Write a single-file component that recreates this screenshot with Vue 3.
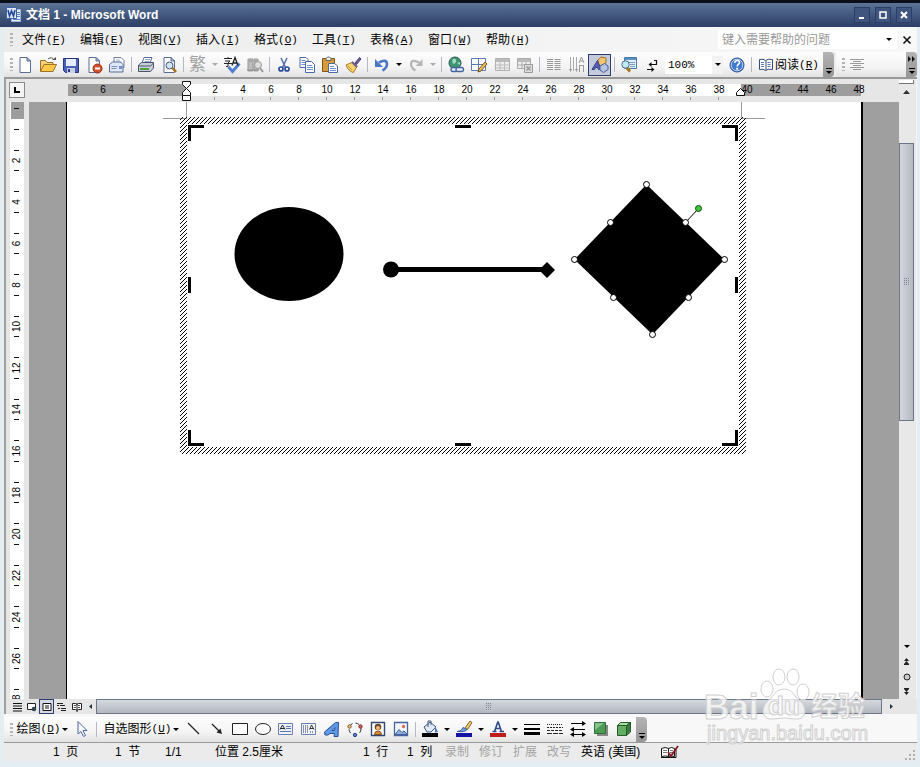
<script setup>
const menus = [
  ['文件', 'F'], ['编辑', 'E'], ['视图', 'V'], ['插入', 'I'], ['格式', 'O'],
  ['工具', 'T'], ['表格', 'A'], ['窗口', 'W'], ['帮助', 'H'],
]

const page = '<path d="M4 1.500h7l3.500 3.500v11.500h-10.500z" fill="#fff" stroke="#5a6c94"/><path d="M11 1.500v3.500h3.500z" fill="#b8c8e4" stroke="#5a6c94"/>'
const icons = {
  newDoc: page,
  open: '<path d="M1.500 15.500v-11h5l1.500 2h6v9z" fill="#f3d27a" stroke="#9c7424"/><path d="M1.500 15.500l3.500-7h12.500l-3.500 7z" fill="#ffc84a" stroke="#9c7424"/><path d="M9 3q4-3 6 1" fill="none" stroke="#555"/><path d="M13 4h4v-3z" fill="#555"/>',
  save: '<path d="M1.500 2.500h15v14h-13l-2-2z" fill="#4a5fb8" stroke="#28367e"/><path d="M4 3h10v7h-10z" fill="#e6ecfa"/><path d="M5 12h8v5h-8z" fill="#c9d0e6"/><path d="M6 13h2v3h-2z" fill="#28367e"/>',
  permission: page + '<circle cx="12.500" cy="12.500" r="4.500" fill="#d2502c" stroke="#8f2e18"/><path d="M10 11.500h5v2h-5z" fill="#fff"/>',
  mail: '<path d="M6 1.500h7l3 3v7h-10z" fill="#fff" stroke="#6d7fa0"/><path d="M8 4h4M8 6h6" stroke="#9fb0cc"/><path d="M1.500 8.500l3-2.500h8l2.500 2.500v7.500h-13.500z" fill="#dfe8f6" stroke="#5a6c94"/><path d="M3.500 10.500h6M3.500 12.500h5" stroke="#7d90b4"/><path d="M11 10h3v3h-3z" fill="#6d90cc"/>',
  print: '<path d="M5 7l2-5.500h8l-2 5.500z" fill="#fff" stroke="#5a6c94"/><path d="M8 3.500h5M7.500 5.500h5" stroke="#8fa5c8"/><path d="M1.500 9l3-2.500h12v5.500l-3 3.500h-12z" fill="#c8d0dc" stroke="#4a5468"/><path d="M2 10h11.500l3-3" fill="none" stroke="#4a5468"/><path d="M3 12h9v2h-9z" fill="#52a03c"/>',
  preview: page + '<circle cx="9.500" cy="9.500" r="3.500" fill="#cfe6fa" stroke="#4a5468"/><path d="M12.500 12l3.500 4" stroke="#a87020" stroke-width="2.500"/>',
  spell: '<path d="M5.500 11l4 4.500 7-8" fill="none" stroke="#4f7fd0" stroke-width="3"/><path d="M1 2.500h8M5 1v2M2 5h5l-2 2v3.500h-2M1 7.500h8" fill="none" stroke="#222"/><path d="M9 9.500l3-8 3 8M10 7h4" fill="none" stroke="#222" stroke-width="1.300"/>',
  research: '<path d="M2 3h5v12h-5zM8 3h4v12h-4z" fill="#bcbcbc" stroke="#999"/><path d="M3 5h3M9 5h2M1 14h12" stroke="#8e8e8e"/><circle cx="12" cy="9" r="3.500" fill="#ddd" stroke="#999"/><path d="M14 12l3 4" stroke="#999" stroke-width="2"/>',
  cut: '<path d="M6 2l4.500 9.500M12 2l-4.500 9.500" stroke="#5c72a8" stroke-width="1.600"/><circle cx="6" cy="13" r="2" fill="none" stroke="#2b4b9c" stroke-width="1.700"/><circle cx="12" cy="13" r="2" fill="none" stroke="#2b4b9c" stroke-width="1.700"/>',
  copy: '<path d="M2 1.500h6l2 2v8h-8z" fill="#fff" stroke="#4a67a8"/><path d="M3.500 4.500h4M3.500 6.500h4M3.500 8.500h4" stroke="#6c8fd0"/><path d="M7.500 5.500h6l3 3v8h-9z" fill="#fff" stroke="#4a67a8"/><path d="M9 9.500h5M9 11.500h6M9 13.500h6" stroke="#6c8fd0"/>',
  paste: '<path d="M1.500 2.500h12v13h-12z" fill="#d99a38" stroke="#80581c"/><path d="M5 4.500v-2l1.500-1.500h2l1.500 1.500v2z" fill="#e9edf2" stroke="#666"/><path d="M7.500 7.500h6l3 2.500v6.500h-9z" fill="#fff" stroke="#4a67a8"/><path d="M9 10.500h4M9 12.500h6M9 14.500h6" stroke="#6c8fd0"/>',
  brush: '<path d="M11 7l4.500-5.500 1.500 1.500-4.500 5.500z" fill="#72629c" stroke="#4b3f72"/><path d="M2 9l7-3 4 4.500-3.500 6q-5-1-7.500-7.500z" fill="#f6d26c" stroke="#a47c28"/><path d="M8 6l5 5" stroke="#6d5f8e" stroke-width="2"/><path d="M4 10l4 4" stroke="#c49436"/>',
  undo: '<path d="M6 6.500q7.500-4 8 1.500 0 4-4.500 6.500" fill="none" stroke="#4a76c8" stroke-width="2.600"/><path d="M2 3v8h8z" fill="#4a76c8"/>',
  redo: '<path d="M12 6.500q-7.500-4-8 1.500 0 4 4.500 6.500" fill="none" stroke="#b5b5b5" stroke-width="2.200"/><path d="M15.500 3v7h-7z" fill="#b5b5b5"/>',
  link: '<circle cx="8" cy="7" r="6" fill="#3c9470" stroke="#245c58"/><path d="M5 4q3-3 4 0t-3 4zM10 7l3-1v3z" fill="#a5dcc0"/><rect x="4" y="11.500" width="7" height="4" rx="2" fill="#e5edfa" stroke="#44629c" stroke-width="1.300"/><rect x="9" y="11.500" width="7.500" height="4" rx="2" fill="#e5edfa" stroke="#44629c" stroke-width="1.300"/>',
  tableDraw: '<path d="M1.500 2.500h14v12h-14zM1.500 8.500h14M8.500 2.500v12" fill="#fff" stroke="#5a78b4"/><path d="M8 16l1-3 6-7 2 2-6 7z" fill="#f0c058" stroke="#73501c"/>',
  tableIns: '<path d="M2.500 2.500h14v12h-14z" fill="#eee" stroke="#b0b0b0"/><path d="M3 3h13v3h-13z" fill="#bbb"/><path d="M3 9h13M3 12h13M7 6v8M11.500 6v8" stroke="#bbb"/>',
  sheet: '<path d="M1.500 2.500h13v10h-13z" fill="#eee" stroke="#aaa"/><path d="M2 3h12v3h-12z" fill="#bbb"/><path d="M2 9h12M6 6v6M10 6v6" stroke="#aaa"/><path d="M8.500 8.500h8v8h-8z" fill="#ddd" stroke="#999"/><path d="M10.500 10.500l4 4M14.500 10.500l-4 4" stroke="#999" stroke-width="1.500"/>',
  columns: '<path d="M2 3.500h6M2 5.500h6M2 7.500h6M2 9.500h6M2 11.500h6M2 13.500h6M9.500 3.500h6M9.500 5.500h6M9.500 7.500h6M9.500 9.500h6M9.500 11.500h6M9.500 13.500h6" stroke="#999"/>',
  direction: '<path d="M2.500 1v14M5.500 1v14M8.500 1v14" stroke="#aaa"/><path d="M1 13l1.500 3 1.500-3zM7 13l1.500 3 1.500-3z" fill="#999"/><path d="M11 7l2.500-6 2.500 6M12 5h3M11 9.500h5M11.500 10v6M15.500 10v6" fill="none" stroke="#999"/>',
  drawing: '<path d="M7 4l3-3 5 1v5l-3 3-5-1z" fill="#f0c470" stroke="#a0742c"/><path d="M1 13.500l5.500-9 3.500 9h-2.500l-1-2h-2l-1 2z" fill="#5b5cb8" stroke="#33407e"/><path d="M9 10l4.500-2.500 3.500 2.500v3.500l-4.500 3-3.500-2.500z" fill="#b4c4e4" stroke="#4a5c90"/>',
  map: '<path d="M4.500 1.500h12v11h-12z" fill="#e2f0fa" stroke="#4a78a8"/><path d="M5 2h11v2h-11z" fill="#5b90c8"/><path d="M9 6.500h6M10 8.500h5M10 10.500h5" stroke="#7d9cc0"/><circle cx="5.500" cy="8.500" r="3.700" fill="#bfeaf6" stroke="#48708c"/><path d="M7 12l3 3.500" stroke="#a87820" stroke-width="3"/>',
  marks: '<path d="M13.500 4v4.500h-6M4 13.500h6" fill="none" stroke="#111" stroke-width="1.200"/><path d="M8.500 6v5l-3-2.500zM8.500 11v5l3-2.500zM11 4h3v1h-3z" fill="#111"/>',
  help: '<circle cx="9" cy="9" r="7" fill="#3f78cc" stroke="#2a4c94"/><circle cx="9" cy="9" r="5.800" fill="none" stroke="#bcd6f6"/><path d="M6.700 7q.300-2.500 2.500-2.500t2.300 2q0 1.200-1.300 2-1 .700-1 2" fill="none" stroke="#fff" stroke-width="1.600"/><path d="M8.200 11.700h2v2h-2z" fill="#fff"/>',
  book: '<path d="M2.500 3.500q4-1 6 1 2.500-2 7-1v10q-5-1-7 1-2-2-6-1z" fill="#fff" stroke="#334a78"/><path d="M9 5v9" stroke="#334a78"/><path d="M4 6.500h3M4 8.500h3M4 10.500h3M10.500 6.500h3M10.500 8.500h3M10.500 10.500h3" stroke="#5e7cae"/>',
  center: '<path d="M2 3.500h14M5 5.500h8M2 7.500h14M5 9.500h8M2 11.500h14M5 13.500h8" stroke="#999"/>',
  pointer: '<path d="M5 1.500v12.500l3-2.500 2.500 5 2-1-2.500-5h4z" fill="#f4f7fd" stroke="#53699a"/>',
  line: '<path d="M3 3l11 11" stroke="#222" stroke-width="1.300"/>',
  arrow: '<path d="M4 4l8 8" stroke="#222" stroke-width="1.300"/><path d="M14 14l-1.500-5.500-4 4z" fill="#222"/>',
  rect: '<path d="M1.500 3.500h15v11h-15z" fill="#fff" stroke="#222"/>',
  oval: '<ellipse cx="9" cy="9" rx="7.500" ry="5.500" fill="#fff" stroke="#222"/>',
  textH: '<path d="M1.500 3.500h14v11h-14z" fill="#eef3fb" stroke="#6a80b0"/><path d="M3 9.500l2.500-4.500 2.500 4.500M4 8.500h3" fill="none" stroke="#222"/><path d="M9 6.500h5M9 8.500h5M3 11.500h11" fill="none" stroke="#5a74ac"/>',
  textV: '<path d="M1.500 3.500h14v11h-14z" fill="#f3f4f7" stroke="#6a80b0"/><path d="M3.500 5v8M5.500 5v8M7.500 5v8M10.500 11v2M12.500 11v2" stroke="#8a93a6"/><path d="M9.500 9.500l2-4.500 2.500 4.500M10 8.500h3" fill="none" stroke="#333"/>',
  wordart: '<path d="M1.500 12l11-9.500h3l-.500 14h-4l.500-3h-4.500l-2 1.500h-3zM9 10.500h2.500l.500-3z" fill="#5f9be4" stroke="#2a4f9c" fill-rule="evenodd"/>',
  diagram: '<circle cx="9" cy="9" r="6" fill="none" stroke="#333" stroke-dasharray="4 3"/><circle cx="3.500" cy="6.500" r="1.700" fill="#f0c080" stroke="#7c5a24"/><circle cx="14.500" cy="6.500" r="1.700" fill="#d8604c" stroke="#7c342c"/><circle cx="9" cy="15" r="1.700" fill="#5a7cd0" stroke="#2c4280"/>',
  clipart: '<path d="M2.500 2.500h13v13h-13z" fill="#fff" stroke="#334a78" stroke-width="1.400"/><circle cx="9" cy="7" r="3.300" fill="#6c4a2c"/><circle cx="9" cy="8" r="2" fill="#f2b87a"/><path d="M5.500 14.500q0-3.500 3.500-3.500t3.500 3.500z" fill="#e08a34" stroke="#8a4c18"/>',
  picture: '<path d="M2.500 2.500h13v13h-13z" fill="#f2f6fd" stroke="#4a649c" stroke-width="1.300"/><path d="M3 14.500l4-5 3 3 2-1.500 3 3v.500z" fill="#8dacdc" stroke="#44609a"/><circle cx="11.500" cy="6.500" r="1.700" fill="#e26c4c"/>',
  fill: '<path d="M3 7l6-5 6 5-5 5h-4z" fill="#dfe8f4" stroke="#3f5684"/><path d="M7 7v-6h3v4" fill="none" stroke="#3f5684"/><path d="M14 6l3 6-3 .500z" fill="#4a7ac4"/><path d="M1 13h16v4h-16z" fill="#000"/>',
  lineColor: '<path d="M10 8l5-7 2 1.500-4.500 7z" fill="#f2cc70" stroke="#7c5c24"/><path d="M2 11.500q5 0 6-4l4 2q-2 3-10 2z" fill="#72a0e4" stroke="#3a5ca4"/><path d="M1 13h16v4h-16z" fill="#1414a4"/>',
  fontColor: '<path d="M3.500 11.500h4M10.500 11.500h4.500M5.500 11.500l3.500-10M9 1.500l3.500 10M7 8.500h4.500" fill="none" stroke="#304c88" stroke-width="1.600"/><path d="M1 13h16v4h-16z" fill="#c01c1c"/>',
  lineStyle: '<path d="M1 4.500h16" stroke="#000"/><path d="M1 9h16" stroke="#000" stroke-width="2"/><path d="M1 13.500h16" stroke="#000" stroke-width="3"/>',
  dashStyle: '<path d="M1 4.500h16" stroke="#222" stroke-dasharray="1 1"/><path d="M1 7.500h16" stroke="#222" stroke-dasharray="2 1"/><path d="M1 10.500h16" stroke="#222" stroke-dasharray="3 1"/><path d="M1 13.500h16" stroke="#222" stroke-dasharray="5 1"/>',
  arrowStyle: '<path d="M2 3.500h12M3 9.500h13M3 14.500h12" stroke="#000"/><path d="M13 1l4 2.500-4 2.500zM5 7l-4 2.500 4 2.500zM5 12l-4 2.500 4 2.500zM13 12l4 2.500-4 2.500z" fill="#000"/>',
  shadow: '<path d="M5 5h11v11h-11z" fill="#888"/><path d="M2.500 2.500h11v11h-11z" fill="#4c9c54" stroke="#2c6c38"/><path d="M3 3h9l-9 7z" fill="#86c48a"/>',
  cube: '<path d="M2.500 5.500h9v10h-9z" fill="#63ae62" stroke="#25592c"/><path d="M2.500 5.500l3-3h10l-4 3z" fill="#a8dca0" stroke="#25592c"/><path d="M11.500 5.500l4-3v9.500l-4 3.500z" fill="#3a7c40" stroke="#25592c"/>',
  normalView: '<path d="M5 5.500h9M5 8h9M5 10.500h9M5 13h9" stroke="#111"/>',
  webView: '<path d="M4.500 5.500h8v6h-8z" fill="#fff" stroke="#222"/><circle cx="11" cy="11" r="2.300" fill="#345" />',
  printView: '<path d="M5 5.500h8v7h-8z" fill="#fff" stroke="#111"/><path d="M7 8h4M7 10h4" stroke="#111"/>',
  outline: '<path d="M4 5.500h6M7 7.500h5M8 10.500h5M8 12.500h5" stroke="#222"/><path d="M4 7h2v1h-2zM5 10h2v1h-2z" fill="#222"/>',
  reading: '<path d="M4.500 5.500h3l1.500 1 1.500-1h3v6h-3l-1.500 1-1.500-1h-3zM9 5v9" fill="#fff" stroke="#222"/><path d="M6 7.500h2M6 9.500h2M10 7.500h2M10 9.500h2" stroke="#555"/>',
}

const bar = [
  ['newDoc', '新建'], ['open', '打开'], ['save', '保存'], ['permission', '权限'], ['mail', '电子邮件'], '|',
  ['print', '打印'], ['preview', '打印预览'], '|',
  ['trad', '中文简繁转换'], 'v-', ['spell', '拼写和语法'], ['research', '信息检索'], '|',
  ['cut', '剪切'], ['copy', '复制'], ['paste', '粘贴'], ['brush', '格式刷'], '|',
  ['undo', '撤消'], 'v', ['redo', '恢复'], 'v-', '|',
  ['link', '超链接'], ['tableDraw', '表格和边框'], ['tableIns', '插入表格'], ['sheet', '插入工作表'], '|',
  ['columns', '分栏'], ['direction', '文字方向'], ['drawing', '绘图', true], '|',
  ['map', '文档结构图'], ['marks', '显示编辑标记'],
]

const shapesBar = [
  ['line', '直线'], ['arrow', '箭头'], ['rect', '矩形'], ['oval', '椭圆'], ['textH', '文本框'],
  ['textV', '竖排文本框'], ['wordart', '艺术字'], ['diagram', '图示'], ['clipart', '剪贴画'], ['picture', '图片'], '|',
  ['fill', '填充颜色'], 'v', ['lineColor', '线条颜色'], 'v', ['fontColor', '字体颜色'], 'v',
  ['lineStyle', '线型'], ['dashStyle', '虚线线型'], ['arrowStyle', '箭头样式'], ['shadow', '阴影样式'], ['cube', '三维效果样式'],
]

const views = [
  ['normalView', '普通视图'], ['webView', 'Web 版式视图'], ['printView', '页面视图', true],
  ['outline', '大纲视图'], ['reading', '阅读版式'],
]

const hMarks = Array.from({ length: 29 }, (_, i) => i * 2 - 8).filter((n) => n !== 0)
const vMarks = Array.from({ length: 14 }, (_, i) => (i + 1) * 2)
const vTicks = Array.from({ length: 29 }, (_, i) => i)

const handles = [
  [646.5, 184.5], [610.5, 222.5], [685.5, 222.5], [574.5, 259.5],
  [724.5, 259.5], [613.5, 297.5], [688.5, 297.5], [652.5, 334.5],
]
</script>

<template>
  <div class="window">
    <header class="titlebar">
      <svg class="logo" width="16" height="16" viewBox="0 0 16 16">
        <path d="M5.500 2.500h9v12h-9z" fill="#e8effb" stroke="#9fb6de" />
        <path d="M11 5.500h3M11 7.500h3M11 9.500h3M7 12.500h7" stroke="#5a80c0" />
        <path d="M.5.500h10v11h-10z" fill="#dce8fa" stroke="#3d62a8" />
        <path d="M2 3l1.500 6L5.500 4l2 5L9 3" fill="none" stroke="#234a94" stroke-width="1.600" />
      </svg>
      <h1>文档 1 - Microsoft Word</h1>
      <div class="winbtns">
        <button aria-label="最小化"><svg width="14" height="14"><path d="M4 10h5" stroke="#fff" stroke-width="2" /></svg></button>
        <button aria-label="最大化"><svg width="14" height="14"><path d="M4 4h6v6h-6zM4 4h6" fill="none" stroke="#fff" stroke-width="1.500" /></svg></button>
        <button aria-label="关闭"><svg width="14" height="14"><path d="M4 4l6 6M10 4l-6 6" stroke="#fff" stroke-width="2" /></svg></button>
      </div>
    </header>

    <div class="body">
      <nav class="menubar">
        <span class="grip"></span>
        <button v-for="m in menus" :key="m[1]" class="menu">{{ m[0] }}<span class="key">(<u>{{ m[1] }}</u>)</span></button>
        <input class="ask" type="text" placeholder="键入需要帮助的问题" aria-label="键入需要帮助的问题" />
        <button class="askdrop" aria-label="展开"><i class="caret"></i></button>
        <button class="docclose" aria-label="关闭文档"><svg width="10" height="10"><path d="M1.500 1.500l7 7M8.500 1.500l-7 7" stroke="#111" stroke-width="1.600" /></svg></button>
      </nav>

      <div class="toolrow">
        <div class="toolbar">
          <span class="grip"></span>
          <template v-for="(t, i) in bar" :key="i">
            <span v-if="t === '|'" class="sep"></span>
            <button v-else-if="t === 'v' || t === 'v-'" class="drop" aria-label="更多"><i class="caret" :class="{ dim: t === 'v-' }"></i></button>
            <button v-else-if="t[0] === 'trad'" class="tool trad" :aria-label="t[1]">繁</button>
            <button v-else class="tool" :class="{ on: t[2] }" :aria-label="t[1]"><svg width="18" height="18" viewBox="0 0 18 18" v-html="icons[t[0]]"></svg></button>
          </template>
          <div class="zoom">
            <input type="text" value="100%" aria-label="显示比例" />
            <button aria-label="选择比例"><i class="caret"></i></button>
          </div>
          <button class="tool" aria-label="帮助"><svg width="18" height="18" viewBox="0 0 18 18" v-html="icons.help"></svg></button>
          <span class="sep"></span>
          <button class="read"><svg width="18" height="18" viewBox="0 0 18 18" v-html="icons.book"></svg>阅读<span class="key">(<u>R</u>)</span></button>
          <button class="cap" aria-label="工具栏选项"><i class="dash"></i><i class="caret"></i></button>
        </div>
        <div class="toolbar rest">
          <span class="grip"></span>
          <button class="tool" aria-label="居中"><svg width="18" height="18" viewBox="0 0 18 18" v-html="icons.center"></svg></button>
          <button class="cap end" aria-label="格式工具栏选项">
            <svg width="8" height="6"><path d="M0 0l3 3-3 3zM4 0l3 3-3 3z" fill="#111" /></svg>
            <i class="dash"></i><i class="caret"></i>
          </button>
        </div>
      </div>

      <main class="work">
        <div class="left">
          <div class="hruler">
            <button class="corner" aria-label="左对齐制表符"><svg width="8" height="8"><path d="M2 1v5h5" fill="none" stroke="#000" stroke-width="2" /></svg></button>
            <svg class="hscale" height="22">
              <rect x="39" y="4" width="118" height="12" fill="#9d9d9d" />
              <rect x="157" y="4" width="555" height="12" fill="#fff" />
              <rect x="712" y="4" width="120" height="12" fill="#9d9d9d" />
              <g v-for="n in hMarks" :key="n">
                <text :x="158 + n * 14" y="13" text-anchor="middle">{{ Math.abs(n) }}</text>
                <path v-if="n > 0 && n < 40" :d="`M${157.5 + n * 14} 17v3`" stroke="#999" />
              </g>
              <g fill="#fff" stroke="#111">
                <path d="M153.500 1.500h8v3l-4 4-4-4z" />
                <path d="M157.500 8.500l4 4v3h-8v-3z" />
                <path d="M153.500 15.500h8v5h-8z" />
                <path d="M711.500 8.500l4 4v3h-8v-3z" />
              </g>
            </svg>
          </div>
          <div class="docrow">
            <svg class="vscale" width="16">
              <rect x="1" y="0" width="14" height="100%" fill="#fff" />
              <rect x="2" y="0" width="13" height="17" fill="#9d9d9d" />
              <path v-for="k in vTicks" :key="k" :d="`M5 ${Math.round(6 + k * 20.75) + 0.5}h5`" stroke="#111" />
              <text v-for="n in vMarks" :key="'n' + n" :transform="`translate(11 ${17 + n * 20.75}) rotate(-90)`" text-anchor="middle">{{ n }}</text>
            </svg>
            <div class="desk">
              <article class="page">
                <svg class="drawing" viewBox="163 102 602 356" width="602" height="356">
                  <defs>
                    <pattern id="hatch" width="4" height="4" patternUnits="userSpaceOnUse">
                      <path d="M0 3h1v1h-1zM1 2h1v1h-1zM2 1h1v1h-1zM3 0h1v1h-1z" fill="#000" shape-rendering="crispEdges" />
                    </pattern>
                  </defs>
                  <path d="M186.500 102v16.500h-23.500M741.500 102v16.500h23.500" fill="none" stroke="#999" />
                  <path d="M180 117h566v337h-566zM187 124v323h552v-323z" fill="url(#hatch)" fill-rule="evenodd" />
                  <g fill="none" stroke="#000" stroke-width="3">
                    <path d="M204 126.500h-14.500v14.500M722 126.500h14.500v14.500M189.500 430v14.500h14.500M736.500 430v14.500h-14.500" />
                    <path d="M455 126.500h16M455 444.500h16M189.500 277v16M736.500 277v16" />
                  </g>
                  <ellipse cx="289" cy="254" rx="54.500" ry="47" />
                  <path d="M391 269.500h156" stroke="#000" stroke-width="5" />
                  <circle cx="391" cy="269.500" r="8" />
                  <path d="M547 262l8 8-8 8-8-8z" />
                  <path d="M646.500 184.500l78 75-72 75-78-75z" />
                  <path d="M685.500 222.500l13-14" stroke="#000" />
                  <circle v-for="h in handles" :key="h.join()" :cx="h[0]" :cy="h[1]" r="3" fill="#fff" stroke="#000" />
                  <circle cx="698.500" cy="208.500" r="3" fill="#3cc83c" stroke="#124a12" />
                </svg>
              </article>
            </div>
          </div>
        </div>
        <div class="vscroll">
          <span class="split"></span>
          <button class="sbtn up" aria-label="向上滚动"><svg width="7" height="4"><path d="M0 4l3.500-4 3.500 4z" fill="#333" /></svg></button>
          <div class="vtrack"><span class="gap1"></span><span class="vthumb"><i class="dots"></i></span><span class="gap2"></span></div>
          <button class="sbtn" aria-label="向下滚动"><i class="caret"></i></button>
          <button class="sbtn" aria-label="前一页"><svg width="5" height="7"><path d="M0 3l2.500-3 2.500 3zM0 6l2.500-3 2.500 3zM0 6h5v1h-5z" fill="#222" /></svg></button>
          <button class="sbtn" aria-label="选择浏览对象"><svg width="8" height="8"><circle cx="4" cy="4" r="3" fill="#ccc" stroke="#222" /></svg></button>
          <button class="sbtn" aria-label="下一页"><svg width="5" height="7"><path d="M0 0h5v1h-5zM0 1l2.500 3 2.500-3zM0 4l2.500 3 2.500-3z" fill="#222" /></svg></button>
        </div>
      </main>

      <div class="hscroll">
        <button v-for="v in views" :key="v[0]" class="view" :class="{ on: v[2] }" :aria-label="v[1]"><svg width="14" height="14" viewBox="2 2 14 14" v-html="icons[v[0]]"></svg></button>
        <button class="harrow" aria-label="向左滚动"><svg width="3" height="5"><path d="M3 0v5l-3-2.500z" fill="#234" /></svg></button>
        <span class="hthumb"><i class="dots"></i></span>
        <button class="harrow right" aria-label="向右滚动"><svg width="3" height="5"><path d="M0 0v5l3-2.500z" fill="#234" /></svg></button>
      </div>

      <div class="drawrow">
        <div class="toolbar">
          <span class="grip"></span>
          <button class="word">绘图<span class="key">(<u>D</u>)</span><i class="caret"></i></button>
          <button class="tool" aria-label="选择对象"><svg width="18" height="18" viewBox="0 0 18 18" v-html="icons.pointer"></svg></button>
          <span class="sep"></span>
          <button class="word shapes">自选图形<span class="key">(<u>U</u>)</span><i class="caret"></i></button>
          <template v-for="(t, i) in shapesBar" :key="i">
            <span v-if="t === '|'" class="sep"></span>
            <button v-else-if="t === 'v'" class="drop" aria-label="更多"><i class="caret"></i></button>
            <button v-else class="tool" :aria-label="t[1]"><svg width="18" height="18" viewBox="0 0 18 18" v-html="icons[t[0]]"></svg></button>
          </template>
          <button class="cap" aria-label="绘图工具栏选项"><i class="dash"></i><i class="caret"></i></button>
        </div>
      </div>

      <footer class="status">
        <span class="s1">1&nbsp; 页</span>
        <span class="s2">1&nbsp; 节</span>
        <span class="s3">1/1</span>
        <span class="s4">位置 2.5厘米</span>
        <span class="s5">1&nbsp; 行</span>
        <span class="s6">1&nbsp; 列</span>
        <span class="mode">录制</span>
        <span class="mode">修订</span>
        <span class="mode">扩展</span>
        <span class="mode">改写</span>
        <span class="lang">英语 (美国)</span>
        <svg width="20" height="14" viewBox="0 0 20 14">
          <path d="M1.500 3.500q4-2 7 0 3-2 6 0v8q-4-1-6 0-3-1-7 0zM8.500 3.500v8M1 12.500h15v-8" fill="#fff" stroke="#111" />
          <path d="M3 5.500h4M3 7.500h4M10 5.500h3M10 7.500h3" stroke="#777" />
          <path d="M8 7l3 4 7-10" fill="none" stroke="#8a1420" stroke-width="1.800" />
        </svg>
        <svg class="resize" width="12" height="12"><path d="M8 1h2v2h-2zM8 5h2v2h-2zM8 9h2v2h-2zM4 5h2v2h-2zM4 9h2v2h-2zM0 9h2v2h-2z" fill="#b0b0b0" /></svg>
      </footer>
    </div>

    <svg class="watermark" width="166" height="82" viewBox="704 668 166 82">
      <g fill="#fff" fill-opacity=".75" stroke="#d0d0d0">
        <ellipse cx="767" cy="689" rx="6" ry="8" />
        <ellipse cx="779" cy="677" rx="6" ry="8" />
        <ellipse cx="793" cy="677" rx="6" ry="8" />
        <ellipse cx="803" cy="692" rx="6" ry="8" />
        <path d="M784 689q7 0 12 8 9 7 9 14-1 9-10 8-11-2-22 0-9 1-10-8 0-7 9-14 5-8 12-8z" />
        <text class="wm-big" x="704" y="719">Bai</text>
        <text class="wm-du" x="768" y="715">du</text>
        <text class="wm-cn" x="811" y="716">经验</text>
        <text class="wm-url" x="707" y="740">jingyan.baidu.com</text>
      </g>
    </svg>
  </div>
</template>

<style>
body {
  margin: 0;
}
</style>

<style scoped>
* {
  box-sizing: border-box;
}
button,
input {
  font: inherit;
  color: inherit;
  border: 0;
  padding: 0;
  margin: 0;
  background: none;
  outline: 0;
  min-width: 0;
}
button {
  display: flex;
  align-items: center;
  justify-content: center;
  flex: none;
  white-space: nowrap;
}
svg {
  display: block;
  flex: none;
}
.window {
  position: relative;
  display: flex;
  flex-direction: column;
  min-height: 100vh;
  padding-bottom: 6px;
  background: #e4eef2;
  border-top: 3px solid #0b0f1a;
  font: 12px/16px "Liberation Sans", "Noto Sans CJK SC", sans-serif;
  color: #000;
}
.titlebar {
  display: flex;
  align-items: center;
  height: 24px;
  padding: 0 8px 0 6px;
  background: linear-gradient(#5c7498, #4c6389 30%, #3e5379 60%, #2d3f66);
}
h1 {
  flex: 1;
  margin: 0 0 0 4px;
  font-size: 12px;
  line-height: 16px;
  font-weight: 700;
  color: #fff;
}
.winbtns {
  display: flex;
  gap: 5px;
}
.winbtns button {
  width: 16px;
  height: 16px;
  border: 1px solid #2c3e66;
  background: #40557e;
}
.body {
  flex: 1;
  display: flex;
  flex-direction: column;
  margin: 0 3px 0 4px;
  background: #e6e6e6;
}
.menubar {
  display: flex;
  align-items: center;
  height: 25px;
  padding-left: 5px;
  background: linear-gradient(90deg, #ececec, #f8f8f8);
}
.grip {
  flex: none;
  width: 3px;
  height: 13px;
  margin: 0 0 0 1px;
  background: repeating-linear-gradient(#b4b4b4 0 2px, transparent 2px 4px);
}
.menu {
  width: 58px;
  padding-left: 9px;
  justify-content: flex-start;
}
.key {
  font: 11px/16px "Liberation Mono", monospace;
}
.ask {
  width: 163px;
  height: 19px;
  margin-left: auto;
  padding-left: 4px;
  background: #fff;
}
.ask::placeholder {
  color: #999;
  opacity: 1;
}
.askdrop {
  width: 16px;
  height: 19px;
  background: #fff;
}
.docclose {
  width: 20px;
  height: 19px;
}
.caret {
  width: 0;
  height: 0;
  border: 3px solid transparent;
  border-top-color: #000;
  border-bottom: 0;
}
.caret.dim {
  border-top-color: #aaa;
}
.toolrow {
  display: flex;
  gap: 2px;
  height: 27px;
  background: #ededed;
  border-bottom: 2px solid #999;
}
.toolbar {
  display: flex;
  align-items: center;
  flex: none;
  height: 25px;
  padding-left: 5px;
  background: linear-gradient(#fdfdfd, #f4f4f4 60%, #e2e2e2);
  border-radius: 0 4px 4px 0;
}
.toolbar.rest {
  flex: 1;
}
.tool {
  width: 23px;
  height: 22px;
}
.tool.on {
  border: 1px solid #2f3e68;
  background: #c4cbdc;
}
.trad {
  font-size: 17px;
  color: #a2a2a2;
}
.drop {
  width: 11px;
  height: 22px;
}
.sep {
  flex: none;
  width: 6px;
  height: 15px;
  background: linear-gradient(90deg, transparent 3px, #b4b8c2 3px 4px, transparent 4px);
}
.zoom {
  display: flex;
  flex: none;
  width: 58px;
  height: 18px;
  margin: 0 2px;
  background: #fff;
  font: 11px/16px "Liberation Mono", monospace;
}
.zoom input {
  flex: 1;
  width: 40px;
  padding-left: 3px;
}
.zoom button {
  width: 11px;
  background: #f2f2f2;
}
.read {
  width: 68px;
}
.cap {
  flex-direction: column;
  justify-content: flex-end;
  gap: 2px;
  width: 11px;
  height: 25px;
  margin-left: 1px;
  padding-bottom: 3px;
  background: linear-gradient(#b4b4b4, #969696);
  border-radius: 0 4px 4px 0;
}
.cap.end {
  justify-content: space-between;
  margin-left: auto;
  padding-top: 4px;
}
.dash {
  width: 6px;
  height: 1px;
  background: #000;
}
.end .dash {
  margin-top: 4px;
}
.work {
  flex: 1;
  display: flex;
  border-left: 2px solid #a0a0a0;
}
.left {
  flex: 1;
  display: flex;
  flex-direction: column;
  min-width: 0;
  padding-left: 3px;
}
.hruler {
  display: flex;
  gap: 4px;
  height: 23px;
  padding-top: 1px;
}
.corner {
  width: 16px;
  height: 16px;
  margin-top: 2px;
  border: 1px solid #8a8a8a;
  background: #f4f4f4;
}
.hscale {
  flex: 1;
  min-width: 0;
}
.hscale text,
.vscale text {
  font: 10px "Liberation Sans", sans-serif;
}
.docrow {
  flex: 1;
  display: flex;
  gap: 4px;
}
.vscale {
  height: auto;
  align-self: stretch;
}
.desk {
  flex: 1;
  padding: 0 36px 0 37px;
  background: #9f9f9f;
}
.page {
  height: 100%;
  background: #fff;
  border: solid #000;
  border-width: 0 2px 0 1px;
}
.drawing {
  margin: 0 auto;
}
.vscroll {
  display: flex;
  flex-direction: column;
  width: 18px;
  padding-right: 2px;
  padding-top: 1px;
  border-right: 1px solid #f4f4f4;
  background: #e8e8e8;
}
.split {
  height: 4px;
  border: 1px solid #777;
  border-width: 0 1px 1px 0;
  background: #fff;
}
.sbtn {
  height: 15px;
}
.vtrack {
  flex: 1;
  display: flex;
  flex-direction: column;
}
.gap1 {
  flex: 44;
}
.gap2 {
  flex: 219;
}
.vthumb {
  flex: 277;
  display: flex;
  align-items: center;
  justify-content: center;
  border: 1px solid #6d7688;
  background: linear-gradient(90deg, #d4d7dc, #b4b9c2);
}
.dots {
  width: 6px;
  height: 8px;
  background: repeating-linear-gradient(90deg, transparent 0 1px, #c2c6ce 1px 2px), repeating-linear-gradient(#7d8492 0 1px, #c2c6ce 1px 2px);
}
.hscroll {
  display: flex;
  height: 15px;
  padding: 0 17px 0 3px;
  border-left: 2px solid #a0a0a0;
}
.view {
  width: 15px;
  height: 15px;
}
.view.on {
  border: 1px solid #2f3e68;
  background: #d5d9e4;
}
.harrow {
  width: 12px;
}
.harrow.right {
  width: 18px;
}
.hthumb {
  flex: 1;
  display: flex;
  align-items: center;
  justify-content: center;
  border: 1px solid #6d7688;
  background: linear-gradient(#d6d9de, #b2b7c0);
}
.drawrow {
  display: flex;
  align-items: center;
  height: 29px;
  padding-top: 2px;
  background: #f8f8f8;
  border-bottom: 1px solid #999;
}
.word {
  width: 57px;
  padding-left: 2px;
}
.word .caret {
  margin-left: 2px;
}
.word.shapes {
  width: 83px;
}
.status {
  display: flex;
  align-items: center;
  height: 18px;
  padding-left: 49px;
  background: #ebebeb;
}
.status span {
  flex: none;
  white-space: nowrap;
}
.s1 {
  width: 62px;
}
.s2,
.s3 {
  width: 50px;
}
.s4 {
  width: 148px;
}
.s5 {
  width: 44px;
}
.s6 {
  width: 38px;
}
.mode {
  width: 34px;
  color: #a4a4a4;
}
.lang {
  width: 79px;
}
.resize {
  margin-left: auto;
  align-self: flex-end;
}
.watermark {
  position: absolute;
  right: 50px;
  bottom: 17px;
  pointer-events: none;
}
.wm-big {
  font: 700 35px "Liberation Sans", sans-serif;
}
.wm-du {
  font: 700 26px "Liberation Sans", sans-serif;
}
.wm-cn {
  font: 700 27px "Noto Sans CJK SC", sans-serif;
}
.wm-url {
  font: 20px "Liberation Sans", sans-serif;
}
</style>
